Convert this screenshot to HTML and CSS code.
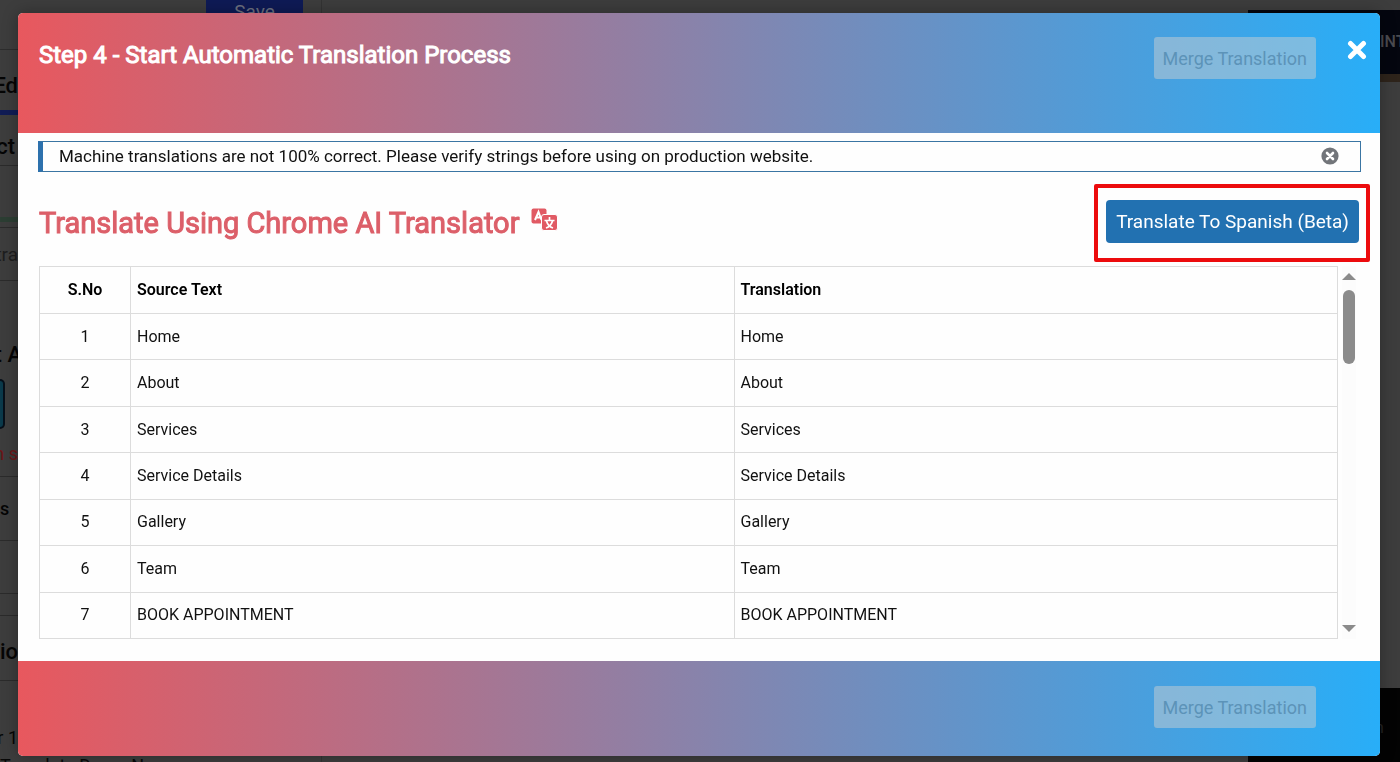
FILE: index.html
```html
<!DOCTYPE html>
<html lang="en">
<head>
    <meta charset="UTF-8">
    <meta name="viewport" content="width=device-width, initial-scale=1.0">
    <title>Automatic Translation</title>
    <link rel="stylesheet" href="styles.css">
</head>
<body>

<!-- Editor page behind the popup -->
<div class="editor">
    <div class="panel">
        <div class="panel-top"><button type="button" class="save-button">Save</button></div>
        <div class="strip">
            <div class="strip-row tab">Ed</div>
            <div class="strip-row section">ct</div>
            <div class="strip-row notice-line"></div>
            <div class="strip-row hint">tra</div>
            <div class="strip-row heading">t A</div>
            <div class="strip-row teal"><span class="teal-box"></span></div>
            <div class="strip-row warn">n s</div>
            <div class="strip-row label">s</div>
            <div class="strip-row field"></div>
            <div class="strip-row gap"></div>
            <div class="strip-row options">ion</div>
            <div class="strip-row rule">r 1</div>
        </div>
        <div class="panel-bottom">Template Demo No</div>
    </div>
    <div class="preview">
        <div class="site">
            <div class="site-nav">INT</div>
            <div class="site-body"></div>
            <div class="site-footer">n</div>
        </div>
    </div>
</div>

<div class="overlay">
    <div class="modal" role="dialog" aria-labelledby="modal-title">
        <header class="modal-header">
            <h2 id="modal-title">Step 4 - Start Automatic Translation Process</h2>
            <div class="header-actions">
                <button type="button" class="merge-button" disabled>Merge Translation</button>
                <button type="button" class="close-button" aria-label="Close">
                    <svg viewBox="0 0 20 20" width="20" height="20"><path d="M3.500 3.500L16.500 16.500M16.500 3.500L3.500 16.500" stroke="#fff" stroke-width="5" stroke-linecap="round"/></svg>
                </button>
            </div>
        </header>

        <main class="modal-body">
            <div class="notice">
                <p>Machine translations are not 100% correct. Please verify strings before using on production website.</p>
                <button type="button" class="dismiss-button" aria-label="Dismiss">
                    <svg viewBox="0 0 18 18" width="18" height="18"><circle cx="9" cy="9" r="8.600" fill="#72757a"/><path d="M6 6l6 6M12 6l-6 6" stroke="#fff" stroke-width="2.600" stroke-linecap="round"/></svg>
                </button>
            </div>

            <div class="title-row">
                <h3>Translate Using Chrome AI Translator
                    <svg viewBox="0 0 27 23" width="27" height="23">
                        <rect x="0.500" y="0.500" width="15" height="15" rx="2" fill="#e15a64"/>
                        <path d="M4 12L7.500 4L10.500 12M5 9.500H10" stroke="#fff" stroke-width="2" fill="none"/>
                        <rect x="10.500" y="6.500" width="16" height="16" rx="2.500" fill="#e15a64" stroke="#fff"/>
                        <path d="M18.500 9v3M13.500 12.500h10M21.500 13c-1 3.500-3.500 6-6.500 7M15.500 13c1 3.500 3.500 6 6.500 7" stroke="#fff" stroke-width="1.700" fill="none"/>
                    </svg>
                </h3>
                <div class="highlight">
                    <button type="button" class="translate-button">Translate To Spanish (Beta)</button>
                </div>
            </div>

            <div class="strings">
                <table>
                    <thead>
                        <tr><th class="number">S.No</th><th>Source Text</th><th>Translation</th></tr>
                    </thead>
                    <tbody>
                        <tr><td class="number">1</td><td>Home</td><td>Home</td></tr>
                        <tr><td class="number">2</td><td>About</td><td>About</td></tr>
                        <tr><td class="number">3</td><td>Services</td><td>Services</td></tr>
                        <tr><td class="number">4</td><td>Service Details</td><td>Service Details</td></tr>
                        <tr><td class="number">5</td><td>Gallery</td><td>Gallery</td></tr>
                        <tr><td class="number">6</td><td>Team</td><td>Team</td></tr>
                        <tr><td class="number">7</td><td>BOOK APPOINTMENT</td><td>BOOK APPOINTMENT</td></tr>
                    </tbody>
                </table>
                <div class="scrollbar">
                    <svg viewBox="0 0 14 7" width="14" height="7"><path d="M0 7L7 0L14 7z" fill="#8b8b8b"/></svg>
                    <div class="thumb"></div>
                    <svg class="arrow-down" viewBox="0 0 14 7" width="14" height="7"><path d="M0 0L7 7L14 0z" fill="#8b8b8b"/></svg>
                </div>
            </div>
        </main>

        <footer class="modal-footer">
            <button type="button" class="merge-button" disabled>Merge Translation</button>
        </footer>
    </div>
</div>

</body>
</html>
```
FILE: styles.css
```css
* {
    box-sizing: border-box;
    margin: 0;
    padding: 0;
}

body {
    font-family: Roboto, "Liberation Sans", sans-serif;
    font-size: 17px;
    color: #111;
    background: #3d3d3d;
    height: 100vh;
    overflow: hidden;
}

button {
    font-family: inherit;
    border: none;
    cursor: pointer;
}

svg {
    display: block;
}

/* Editor page behind the popup */
.editor {
    display: flex;
    justify-content: space-between;
    height: 100vh;
}

.panel {
    width: 322px;
    border-right: 1px solid #333;
    display: flex;
    flex-direction: column;
}

.panel-top {
    height: 50px;
    flex: none;
    border-bottom: 1px solid #2d2d2d;
    padding-right: 18px;
    display: flex;
    justify-content: flex-end;
}

.save-button {
    width: 97px;
    height: 24px;
    background: #0e1a55;
    color: #6c7080;
    font-size: 19px;
    line-height: 24px;
}

.strip {
    flex: none;
    width: 18px;
    overflow: hidden;
}

.strip-row {
    display: flex;
    justify-content: flex-end;
    align-items: center;
    border-bottom: 1px solid #2b2b2b;
    color: #050505;
    font-size: 22px;
    white-space: nowrap;
}

.tab {
    height: 65px;
    padding-top: 10px;
    border-bottom: 5px solid #111c55;
    font-weight: 500;
}

.section {
    height: 51px;
    padding-top: 12px;
    padding-right: 3px;
    font-weight: 500;
}

.notice-line {
    height: 56px;
    border-bottom: 5px solid #2c3e33;
}

.hint {
    height: 54px;
    color: #1e1e1e;
    font-size: 19px;
    border-top: 1px solid #2b2b2b;
    margin-top: 5px;
}

.heading {
    width: 22px;
    height: 95px;
    padding-top: 52px;
    font-weight: 500;
    border: none;
}

.teal {
    height: 55px;
    justify-content: flex-start;
    border: none;
}

.teal-box {
    width: 5px;
    height: 50px;
    background: #0b3a4b;
    border: 2px solid #07101a;
    border-left: none;
    border-radius: 0 7px 7px 0;
}

.warn {
    height: 46px;
    color: #6d1517;
    font-size: 18px;
}

.label {
    height: 64px;
    justify-content: flex-start;
    font-size: 18px;
    font-weight: 500;
}

.field {
    height: 53px;
}

.gap {
    height: 22px;
}

.options {
    height: 65px;
    justify-content: flex-start;
    padding-top: 6px;
    font-weight: 500;
}

.rule {
    height: 76px;
    padding-top: 36px;
    font-size: 18px;
    border: none;
}

.panel-bottom {
    font-size: 18px;
    line-height: 18px;
    color: #080808;
}

.preview {
    width: 152px;
    padding-top: 10px;
}

.site {
    height: 100%;
    display: flex;
    flex-direction: column;
}

.site-nav {
    height: 72px;
    padding-left: 132px;
    background: #04060f;
    border-bottom: 8px solid #2e241b;
    color: #4b4b50;
    font-size: 16px;
    font-weight: 500;
    line-height: 64px;
}

.site-body {
    flex: 1;
}

.site-footer {
    height: 74px;
    padding-right: 16px;
    background: #030303;
    color: #222;
    line-height: 78px;
    text-align: right;
}

/* Popup */
.overlay {
    position: fixed;
    inset: 0;
    padding: 13px 20px 6px 18px;
}

.modal {
    height: 100%;
    display: flex;
    flex-direction: column;
    background: #fefefe;
    border-radius: 5px;
    overflow: hidden;
    box-shadow: 0 0 16px rgba(0, 0, 0, 0.3);
}

.modal-header,
.modal-footer {
    flex: none;
    display: flex;
    background: linear-gradient(90deg, #e8585e, #28aef8);
}

.modal-header {
    height: 120px;
    padding: 24px 13px 0 21px;
    justify-content: space-between;
    align-items: flex-start;
}

.modal-footer {
    height: 95px;
    padding: 25px 64px 0 21px;
    justify-content: flex-end;
    align-items: flex-start;
}

.modal-header h2 {
    color: #fff;
    font-size: 24px;
    font-weight: 400;
    line-height: 36px;
    -webkit-text-stroke: 1px;
}

.header-actions {
    display: flex;
    align-items: flex-start;
    gap: 31px;
}

.merge-button {
    height: 42px;
    padding: 0 9px;
    background: rgba(200, 205, 210, 0.5);
    border-radius: 3px;
    color: #5c93b8;
    font-size: 18px;
}

.close-button {
    background: none;
    padding-top: 3px;
}

.modal-body {
    flex: 1;
    padding: 8px 19px 22px 20px;
    display: flex;
    flex-direction: column;
}

.notice {
    display: flex;
    justify-content: space-between;
    align-items: center;
    height: 31px;
    flex: none;
    padding: 0 21px 1px 16px;
    border: 1px solid #3a75a3;
    border-left: 5px solid #2d71ad;
}

.dismiss-button {
    background: none;
}

.title-row {
    display: flex;
    justify-content: space-between;
    align-items: center;
    height: 94px;
    flex: none;
    padding-top: 7px;
}

.title-row h3 {
    display: flex;
    gap: 12px;
    color: #dc5f69;
    font-size: 29px;
    font-weight: 400;
    line-height: 36px;
    padding-left: 1px;
    -webkit-text-stroke: 1px;
}

.title-row h3 svg {
    margin-top: 3px;
}

.highlight {
    padding: 12px 7px 15px 8px;
    margin-right: -9px;
    border: 4px solid #ec0b0d;
    border-radius: 2px;
}

.translate-button {
    display: block;
    height: 43px;
    padding: 0 10px;
    background: #2271b1;
    border-radius: 4px;
    color: #fff;
    font-size: 19px;
}

.strings {
    flex: 1;
    display: flex;
    gap: 4px;
    padding: 0 5px 0 1px;
}

table {
    flex: 1;
    table-layout: fixed;
    border-collapse: collapse;
    font-size: 16px;
}

th,
td {
    border: 1px solid #dcdcdc;
    padding: 12px 6px;
    line-height: 20px;
    text-align: left;
}

th {
    padding: 13px 6px;
    font-weight: 600;
    color: #000;
}

.number {
    width: 91px;
    text-align: center;
}

.scrollbar {
    width: 14px;
    padding: 7px 0;
    background: #fcfcfc;
    display: flex;
    flex-direction: column;
    align-items: center;
}

.thumb {
    width: 12px;
    height: 74px;
    margin-top: 10px;
    border-radius: 6px;
    background: #8b8b8b;
}

.arrow-down {
    margin-top: auto;
}
```
